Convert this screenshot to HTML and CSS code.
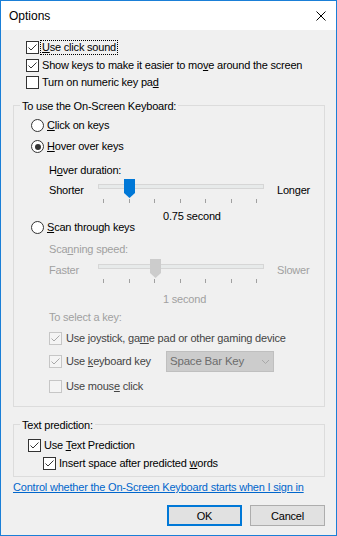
FILE: index.html
```html
<!DOCTYPE html>
<html lang="en">
<head>
    <meta charset="UTF-8">
    <title>Options</title>
    <link rel="stylesheet" href="styles.css">
</head>
<body>
    <div class="window">
        <div class="titlebar">
            <span class="title">Options</span>
            <svg class="close" width="10" height="10" viewBox="0 0 10 10"><path d="M0.5 0.5L9.5 9.5M9.5 0.5L0.5 9.5" stroke="#000" stroke-width="1" fill="none"/></svg>
        </div>
        <div class="content">
            <div class="row top first">
                <span class="box"><svg viewBox="0 0 11 11"><polyline points="1.5,5.5 4,8 9.5,2.5"/></svg></span>
                <span class="focus"><u>U</u>se click sound</span>
            </div>
            <div class="row top">
                <span class="box"><svg viewBox="0 0 11 11"><polyline points="1.5,5.5 4,8 9.5,2.5"/></svg></span>
                <span>Show keys to make it easier to mo<u>v</u>e around the screen</span>
            </div>
            <div class="row top">
                <span class="box"></span>
                <span>Turn on numeric key pa<u>d</u></span>
            </div>

            <div class="group keyboard">
                <span class="legend">To use the On-Screen Keyboard:</span>
                <div class="row radio-row">
                    <span class="radio"></span>
                    <span><u>C</u>lick on keys</span>
                </div>
                <div class="row radio-row hover">
                    <span class="radio on"></span>
                    <span><u>H</u>over over keys</span>
                </div>
                <div class="caption hover-caption">H<u>o</u>ver duration:</div>
                <div class="slider">
                    <span class="slider-label">Shorter</span>
                    <div class="track-wrap">
                        <div class="track"></div>
                        <svg class="thumb" style="left: 26px" width="11" height="19" viewBox="0 0 11 19"><polygon points="0,0 11,0 11,14 5.5,19 0,14" fill="#0078d7"/></svg>
                        <div class="ticks"><i></i><i></i><i></i><i></i><i></i><i></i><i></i></div>
                    </div>
                    <span class="slider-end">Longer</span>
                </div>
                <div class="scan-row">
                    <div class="row scan">
                        <span class="radio"></span>
                        <span><u>S</u>can through keys</span>
                    </div>
                    <span class="value">0.75 second</span>
                </div>
                <div class="caption muted speed-caption">Sca<u>n</u>ning speed:</div>
                <div class="slider muted off">
                    <span class="slider-label">Faster</span>
                    <div class="track-wrap">
                        <div class="track"></div>
                        <svg class="thumb" style="left: 52px" width="11" height="19" viewBox="0 0 11 19"><polygon points="0,0 11,0 11,14 5.5,19 0,14" fill="#cccccc"/></svg>
                        <div class="ticks"><i></i><i></i><i></i><i></i><i></i><i></i><i></i></div>
                    </div>
                    <span class="slider-end">Slower</span>
                </div>
                <div class="value muted second">1 second</div>
                <div class="caption muted select-caption">To select a key:</div>
                <div class="row sub disabled joystick">
                    <span class="box"><svg viewBox="0 0 11 11"><polyline points="1.5,5.5 4,8 9.5,2.5"/></svg></span>
                    <span>Use joystick, ga<u>m</u>e pad or other gaming device</span>
                </div>
                <div class="row sub disabled keyrow">
                    <div class="key-label">
                        <span class="box"><svg viewBox="0 0 11 11"><polyline points="1.5,5.5 4,8 9.5,2.5"/></svg></span>
                        <span>Use <u>k</u>eyboard key</span>
                    </div>
                    <div class="select">
                        <span>Space Bar Key</span>
                        <svg width="7" height="4" viewBox="0 0 7 4"><polyline points="0,0 3.5,3.5 7,0" fill="none" stroke="#a8a8a8" stroke-width="1"/></svg>
                    </div>
                </div>
                <div class="row sub disabled mouse">
                    <span class="box"></span>
                    <span>Use mous<u>e</u> click</span>
                </div>
            </div>

            <div class="group prediction">
                <span class="legend">Text prediction:</span>
                <div class="row predict">
                    <span class="box"><svg viewBox="0 0 11 11"><polyline points="1.5,5.5 4,8 9.5,2.5"/></svg></span>
                    <span>Use <u>T</u>ext Prediction</span>
                </div>
                <div class="row insert">
                    <span class="box"><svg viewBox="0 0 11 11"><polyline points="1.5,5.5 4,8 9.5,2.5"/></svg></span>
                    <span>Insert space after predicted <u>w</u>ords</span>
                </div>
            </div>

            <a class="link" href="#">Control whether the On-Screen Keyboard starts when I sign in</a>

            <div class="buttons">
                <button class="button default">OK</button>
                <button class="button">Cancel</button>
            </div>
        </div>
    </div>
</body>
</html>
```

FILE: styles.css
```css
* { box-sizing: border-box; }
body { margin: 0; background: #fff; font-family: "Liberation Sans", Arial, sans-serif; font-size: 11px; letter-spacing: -0.2px; color: #000; }
u { text-decoration: underline; text-underline-offset: 1px; }

.window { width: 337px; height: 536px; border: 1px solid #1a7fd7; background: #f0f0f0; }
.titlebar { height: 29px; background: #fff; display: flex; align-items: center; justify-content: space-between; padding: 0 10px 0 8px; }
.title { font-size: 12px; letter-spacing: 0; }
.close { display: block; }

.content { padding: 9px 11px 0 12px; }

.row { display: flex; align-items: center; gap: 3px; height: 17px; line-height: 13px; white-space: nowrap; }
.row.top { margin-left: 13px; }
.row.first { margin-bottom: 1px; gap: 2px; }
.focus { padding: 0 1px; outline: 1px dotted #000; }

.box { width: 13px; height: 13px; border: 1px solid #333; background: #fff; flex: none; }
.box svg { display: block; width: 11px; height: 11px; fill: none; stroke: #333; stroke-width: 1; }
.radio { width: 13px; height: 13px; border: 1px solid #333; border-radius: 50%; background: #fff; flex: none; position: relative; }
.radio.on::after { content: ""; position: absolute; left: 2.5px; top: 2.5px; width: 6px; height: 6px; border-radius: 50%; background: #333; }

.group { position: relative; border: 1px solid #dcdcdc; }
.legend { position: absolute; top: -6px; left: 6px; padding: 0 2px; background: #f0f0f0; line-height: 13px; }

.keyboard { margin-top: 14px; padding: 11px 0 11px 0; }
.radio-row { margin-left: 17px; }
.radio-row.hover { margin-top: 4px; }
.caption { margin-left: 35px; line-height: 13px; }
.hover-caption { margin-top: 9px; }
.muted { color: #a0a0a0; }

.slider { display: flex; align-items: flex-start; height: 24px; margin: 2px 0 0 35px; }
.slider-label { width: 49px; margin-top: 5px; line-height: 13px; }
.track-wrap { position: relative; width: 166px; height: 24px; }
.track { margin-top: 5px; height: 5px; border: 1px solid #d6d6d6; background: #e7eaea; }
.thumb { position: absolute; top: 0; display: block; }
.ticks { display: flex; justify-content: space-between; height: 4px; margin: 10px 7px 0 5px; }
.ticks i { width: 1px; height: 4px; background: #a0a0a0; }
.slider-end { margin: 5px 0 0 13px; line-height: 13px; }
.slider.off { margin-top: 3px; }

.scan-row { display: flex; align-items: flex-start; margin-top: 7px; height: 26px; }
.row.scan { width: 132px; margin: 9px 0 0 17px; }
.value { line-height: 13px; }
.speed-caption { margin-top: 7px; }
.second { margin: 10px 0 0 149px; }
.select-caption { margin-top: 5px; }

.row.sub { margin-left: 35px; gap: 4px; }
.disabled { color: #444; }
.disabled .box { border-color: #c6c6c6; background: #f4f4f4; }
.disabled .box svg { stroke: #a8a8a8; }
.joystick { margin-top: 6px; }
.row.keyrow { margin-top: 4px; height: 21px; gap: 0; }
.key-label { display: flex; align-items: center; gap: 4px; width: 117px; }
.select { width: 108px; height: 21px; border: 1px solid #bfbfbf; background: #cccccc; color: #6d6d6d; display: flex; align-items: center; justify-content: space-between; padding: 0 4px 0 3px; font-size: 11.5px; }
.mouse { margin-top: 6px; }

.prediction { margin-top: 17px; padding: 12px 0 4px 0; }
.predict { margin-left: 14px; }
.insert { margin: 1px 0 0 29px; }

.link { display: block; margin-top: 4px; line-height: 13px; color: #0066cc; text-decoration: underline; white-space: nowrap; }

.buttons { display: flex; justify-content: flex-end; gap: 8px; margin-top: 11px; }
.button { width: 75px; height: 21px; padding: 0; border: 1px solid #adadad; background: #e1e1e1; font-family: inherit; font-size: 11px; letter-spacing: -0.2px; color: #000; }
.button.default { border: 2px solid #0078d7; }
```
